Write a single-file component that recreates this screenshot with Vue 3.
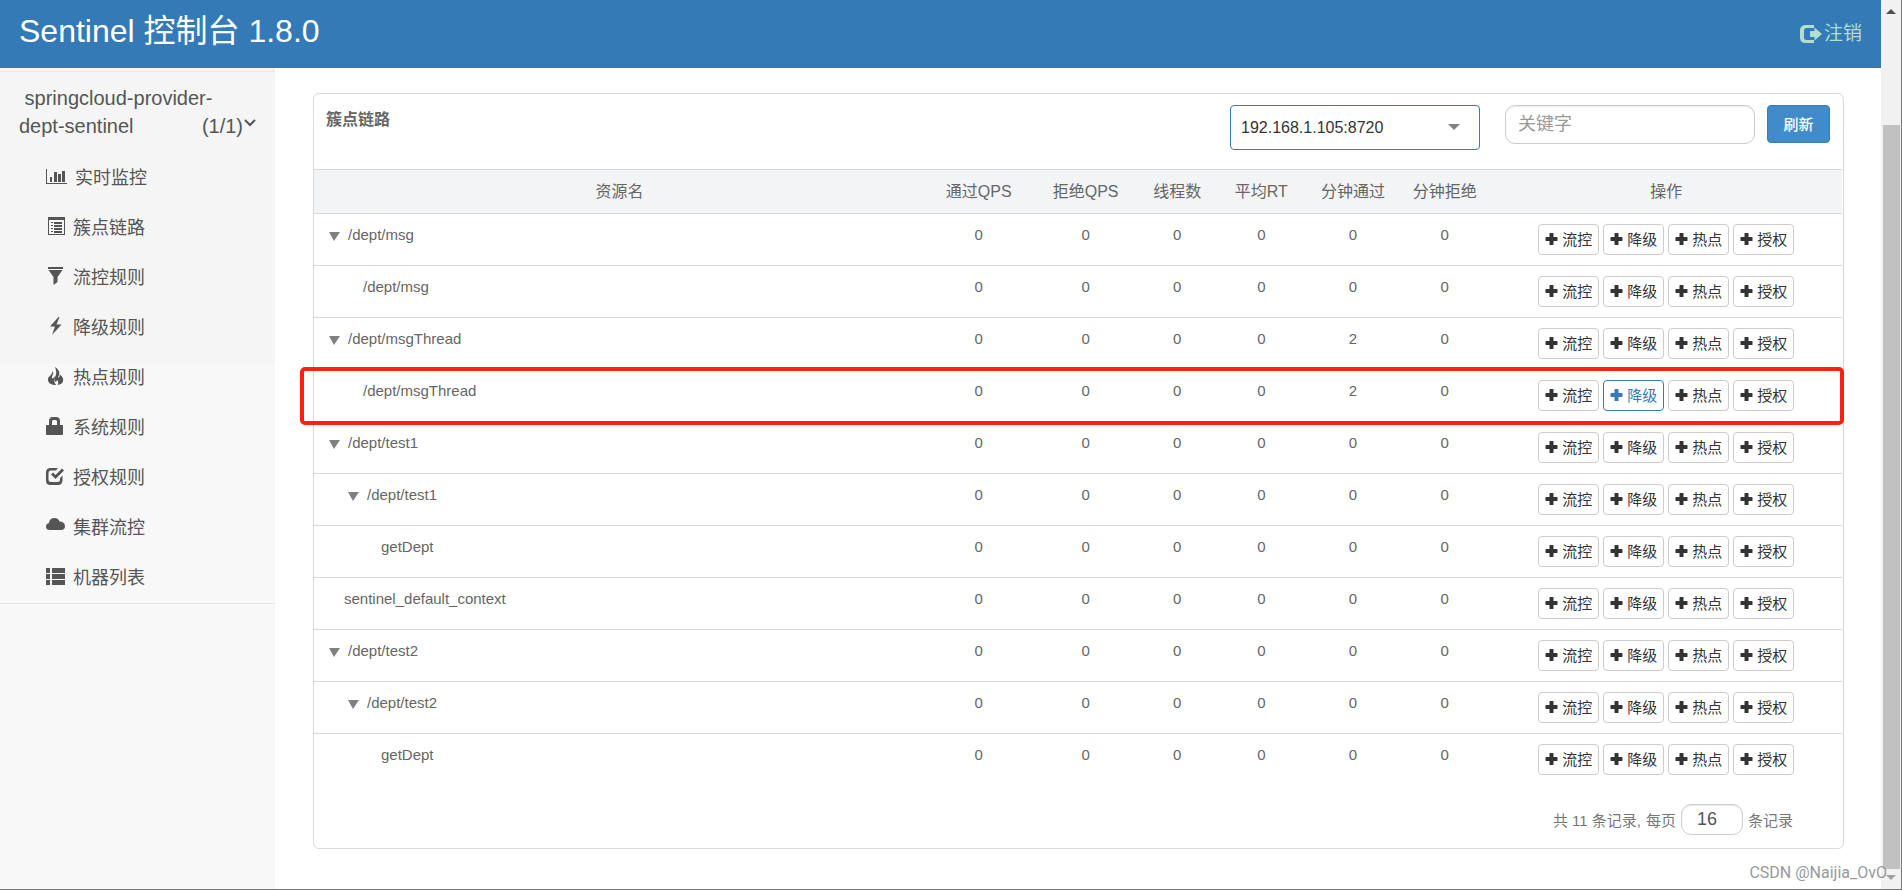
<script setup>
import { ref } from 'vue'

const menu = [
  { icon: 'stats', label: '实时监控' },
  { icon: 'list', label: '簇点链路' },
  { icon: 'filter', label: '流控规则' },
  { icon: 'flash', label: '降级规则' },
  { icon: 'fire', label: '热点规则' },
  { icon: 'lock', label: '系统规则' },
  { icon: 'check', label: '授权规则' },
  { icon: 'cloud', label: '集群流控' },
  { icon: 'rows', label: '机器列表' },
]

const icons = {
  stats: 'M0 2h1v14h20v1H0zM4 10h2v5H4zM8 5h3v10H8zM12 7h3v8h-3zM16 4h3v11h-3z',
  list: 'M2 0h17v18H2zM3 3v14h15V3zM5 5h2v1H5zM8 5h8v2H8zM5 8h2v1H5zM8 8h8v2H8zM5 11h2v1H5zM8 11h8v2H8zM5 14h2v1H5zM8 14h8v2H8z',
  filter: 'M2 0h15v2H2zM2.5 3h14L11.5 10v5L7.500 18v-8z',
  flash: 'M12.500 0L4 9.500h5L6 18l9.500-10.500h-5L13.500 0z',
  fire: 'M9 0c3 2 5 4.500 4.200 7.500C12.700 9 12 9.700 12.300 11c.8-.5 1.400-1.500 1.500-3.500 3.200 2 4 5 3 7.500-.6 1.500-2.700 2.700-5.300 3 1.300-1.700 1-3.600-.3-5-.5 1-1 1.500-1.700 2-1.500-2-1-4.300 0-6C11 6 10 3 9 0zM6.500 4c1.500 2 .5 3.500-.3 5-.7 1.300-.2 2.500.5 2.500s1.500-1 1.600-3C9 11 8 13 8.300 14.500c.2 1.300.8 2.500 1.800 3.500C5.500 18 2 16 2 12.700 1.600 9.500 6.500 8 6.500 4z',
  lock: 'M0 8.500Q0 8 .5 8H3V4Q3 0 7 0h3Q14 0 14 4v4h2.500q.5 0 .5.500V17q0 1-1 1H1q-1 0-1-1zM6 8h5V4.500Q11 3 9.500 3h-2Q6 3 6 4.500z',
  check: 'M4.500 1H12l-2 2.500H5Q2.500 3.500 2.500 6v6.500Q2.500 15 5 15h6.500q2.500 0 2.500-2.500V11l2.500-2.500v4.500Q16.500 18 12 18H4.500Q0 18 0 13.500v-8Q0 1 4.500 1zM5 7.500L7 5.500l2.500 2.500L16 1.500l2 2L9.500 12z',
  cloud: 'M4 13Q0 13 0 9.500q0-3 3-3.500Q3.500 1 8.500 1q4 0 5 3.500 5 0 5.500 4.500 0 4-4 4z',
  rows: 'M0 1h4v5H0zM6 1h13v5H6zM0 7h4v5H0zM6 7h13v5H6zM0 13h4v5H0zM6 13h13v5H6z',
}

const headers = ['资源名', '通过QPS', '拒绝QPS', '线程数', '平均RT', '分钟通过', '分钟拒绝', '操作']
const actions = ['流控', '降级', '热点', '授权']

const rows = [
  { name: '/dept/msg', level: 0, open: true, passed: 0 },
  { name: '/dept/msg', level: 1, passed: 0 },
  { name: '/dept/msgThread', level: 0, open: true, passed: 2 },
  { name: '/dept/msgThread', level: 1, passed: 2, marked: true },
  { name: '/dept/test1', level: 0, open: true, passed: 0 },
  { name: '/dept/test1', level: 1, open: true, passed: 0 },
  { name: 'getDept', level: 2, passed: 0 },
  { name: 'sentinel_default_context', level: 0, passed: 0 },
  { name: '/dept/test2', level: 0, open: true, passed: 0 },
  { name: '/dept/test2', level: 1, open: true, passed: 0 },
  { name: 'getDept', level: 2, passed: 0 },
]

const keyword = ref('')
const pageSize = ref('16')
</script>

<template>
  <div class="page">
    <div class="view">
      <header class="topbar">
        <h1>Sentinel 控制台 1.8.0</h1>
        <a class="logout" href="#">
          <svg width="22" height="18" viewBox="0 0 22 18" aria-hidden="true">
            <path d="M6 0h8v3H6.500Q4 3 4 5.500v7Q4 15 6.500 15H14v3H6Q0 18 0 12.500v-7Q0 0 6 0zM10 6h4.500V2.500L22 9l-7.500 6.500V12H10z" />
          </svg>
          <span>注销</span>
        </a>
      </header>

      <aside class="sidebar">
        <nav class="nav">
          <a class="app" href="#">
            <span>&nbsp;springcloud-provider-</span>
            <span>dept-sentinel</span>
            <span class="count">(1/1)<svg width="12" height="18" viewBox="0 0 12 18" aria-hidden="true"><path d="M1 5l5 5 5-5" /></svg></span>
          </a>
          <ul>
            <li v-for="item in menu" :key="item.label">
              <a href="#">
                <svg :class="['glyph', item.icon]" height="18" aria-hidden="true">
                  <path fill-rule="evenodd" :d="icons[item.icon]" />
                </svg>
                <span>{{ item.label }}</span>
              </a>
            </li>
          </ul>
        </nav>
      </aside>

      <main class="content">
        <section class="card">
          <div class="card-head">
            <h2>簇点链路</h2>
            <div class="machine">
              <select aria-label="机器">
                <option>192.168.1.105:8720</option>
              </select>
              <span class="caret"></span>
            </div>
            <input v-model="keyword" class="search" type="text" placeholder="关键字" aria-label="关键字" />
            <button class="refresh" type="button">刷新</button>
          </div>

          <table>
            <colgroup>
              <col class="c-name" />
              <col class="c-qps" />
              <col class="c-qps" />
              <col class="c-thread" />
              <col class="c-stat" />
              <col class="c-stat" />
              <col class="c-stat" />
              <col />
            </colgroup>
            <thead>
              <tr>
                <th v-for="h in headers" :key="h" scope="col">{{ h }}</th>
              </tr>
            </thead>
            <tbody>
              <tr v-for="(row, i) in rows" :key="i">
                <td class="name">
                  <div :class="['node', 'level-' + row.level, { leaf: !row.open }]">
                    <span v-if="row.open" class="arrow"></span>
                    <span>{{ row.name }}</span>
                  </div>
                  <div v-if="row.marked" class="mark"></div>
                </td>
                <td>0</td>
                <td>0</td>
                <td>0</td>
                <td>0</td>
                <td>{{ row.passed }}</td>
                <td>0</td>
                <td>
                  <div class="actions">
                    <button
                      v-for="(a, n) in actions"
                      :key="a"
                      type="button"
                      :class="{ active: row.marked && n === 1 }"
                    >
                      <svg width="13" height="12" viewBox="0 0 13 12" aria-hidden="true">
                        <path d="M5 0h3q.5 0 .5.500V4h3.500q.5 0 .5.500v3q0 .5-.5.500H8.500v3.500q0 .5-.5.500H5q-.5 0-.5-.5V8H1q-.5 0-.5-.5v-3Q.5 4 1 4h3.500V.5Q4.500 0 5 0z" />
                      </svg>
                      <span>{{ a }}</span>
                    </button>
                  </div>
                </td>
              </tr>
            </tbody>
          </table>

          <div class="pager">
            <span>共 11 条记录, </span>
            <label for="page-size">每页</label>
            <input id="page-size" v-model="pageSize" type="text" />
            <span>条记录</span>
          </div>
        </section>
      </main>
    </div>

    <div class="scroll" aria-hidden="true">
      <span class="tri up"></span>
      <span class="thumb"></span>
      <span class="tri down"></span>
    </div>
    <div class="watermark">CSDN @Naijia_OvO</div>
  </div>
</template>

<style>
body {
  margin: 0;
  background: #fff;
}
</style>

<style scoped>
* {
  box-sizing: border-box;
}

.page {
  position: relative;
  display: grid;
  grid-template-columns: minmax(0, 1fr) 20px;
  min-height: 100vh;
  border-right: 1px solid #777;
  border-bottom: 1px solid #777;
  font-family: "Liberation Sans", "Noto Sans CJK SC", sans-serif;
  font-size: 15px;
  color: #666;
}

a {
  color: inherit;
  text-decoration: none;
}

button,
input,
select {
  font-family: inherit;
}

.view {
  display: grid;
  grid-template-columns: 275px minmax(0, 1fr);
  grid-template-rows: 68px 1fr;
}

.topbar {
  grid-column: 1 / -1;
  display: flex;
  justify-content: space-between;
  padding: 0 19px;
  background: #337ab7;
}

.topbar h1 {
  margin: 0;
  font-size: 32px;
  font-weight: 400;
  line-height: 62px;
  color: #fff;
}

.logout {
  display: flex;
  align-items: center;
  gap: 2px;
  font-size: 19px;
  line-height: 70px;
  color: #b0dfcb;
}

.logout svg,
.glyph,
.actions svg {
  fill: currentColor;
}

.sidebar {
  padding-top: 3px;
  background: linear-gradient(#f5f5f5 296px, #f8f8f8 296px);
}

.nav {
  border-top: 1px solid #e7e7e7;
  border-bottom: 1px solid #e7e7e7;
  color: #555;
}

.app {
  display: flex;
  flex-wrap: wrap;
  padding: 12px 19px 11px 19px;
  font-size: 20px;
  line-height: 28px;
}

.count {
  margin-left: auto;
}

.count svg {
  margin-left: 1px;
  fill: none;
  stroke: #555;
  stroke-width: 2;
}

.nav ul {
  margin: 0;
  padding: 0 0 2px;
  list-style: none;
}

.nav li a {
  display: flex;
  align-items: center;
  gap: 7px;
  height: 50px;
  padding-left: 46px;
  font-size: 18px;
}

.glyph {
  width: 20px;
}

.glyph.stats {
  width: 22px;
}

.content {
  padding: 25px 37px 40px 38px;
}

.card {
  border: 1px solid #d9d9d9;
  border-radius: 6px;
}

.card-head {
  display: flex;
  align-items: flex-start;
  height: 75px;
  padding: 11px 13px 0 12px;
}

.card-head h2 {
  flex: 1;
  margin: 0;
  font-size: 16px;
  font-weight: 700;
  line-height: 30px;
}

.machine {
  position: relative;
  width: 250px;
  margin-right: 25px;
}

.machine select {
  appearance: none;
  display: block;
  width: 100%;
  height: 45px;
  padding: 0 10px;
  border: 1px solid #337ab7;
  border-radius: 4px;
  background: #fff;
  font-size: 16px;
  color: #333;
}

.caret {
  position: absolute;
  top: 19px;
  right: 20px;
  border: 6px solid transparent;
  border-top: 6px solid #808080;
  border-bottom: 0;
}

.search {
  width: 250px;
  height: 39px;
  margin-right: 12px;
  padding: 0 12px;
  border: 1px solid #ccc;
  border-radius: 10px;
  box-shadow: inset 0 1px 1px rgba(0, 0, 0, 0.08);
  font-size: 18px;
  color: #555;
}

.search::placeholder {
  color: #999;
}

.refresh {
  width: 63px;
  height: 38px;
  padding: 0 0 2px;
  border: 1px solid #357ebd;
  border-radius: 4px;
  background: #428bca;
  font-size: 15px;
  font-weight: 500;
  color: #fff;
}

table {
  width: 100%;
  padding-right: 1px;
  table-layout: fixed;
  border-collapse: separate;
  border-spacing: 0;
}

.c-name {
  width: 40%;
}

.c-qps {
  width: 7%;
}

.c-thread {
  width: 5%;
}

.c-stat {
  width: 6%;
}

th {
  height: 44px;
  padding: 0 0 3px;
  border-top: 1px solid #d9d9d9;
  background: #f3f4f6;
  font-size: 16px;
  font-weight: 400;
}

tbody tr {
  position: relative;
}

td {
  height: 52px;
  padding: 10px 0;
  border-top: 1px solid #d9d9d9;
  line-height: 22px;
  text-align: center;
  vertical-align: top;
}

.node {
  display: flex;
  align-items: center;
  gap: 8px;
  padding-left: 15px;
  text-align: left;
}

.node.level-1 {
  padding-left: 34px;
}

.node.leaf {
  padding-left: 30px;
}

.node.leaf.level-1 {
  padding-left: 49px;
}

.node.leaf.level-2 {
  padding-left: 67px;
}

.arrow {
  margin-top: 3px;
  border: 5px solid transparent;
  border-width: 9px 6px 0 5px;
  border-top-color: #808080;
}

.mark {
  position: absolute;
  z-index: 1;
  top: -2px;
  right: -2px;
  bottom: -4px;
  left: -14px;
  border: 4px solid #ff2012;
  border-radius: 5px;
  pointer-events: none;
}

.actions {
  display: flex;
  justify-content: center;
  gap: 4px;
}

.actions button {
  display: flex;
  align-items: center;
  gap: 4px;
  height: 31px;
  padding: 0 6px 2px;
  border: 1px solid #ccc;
  border-radius: 4px;
  background: #fff;
  font-size: 15px;
  color: #333;
}

.actions .active {
  border-color: #337ab7;
  color: #337ab7;
}

.pager {
  display: flex;
  align-items: center;
  justify-content: flex-end;
  gap: 5px;
  height: 63px;
  padding: 6px 50px 0 0;
  color: #777;
}

.pager input {
  width: 62px;
  height: 31px;
  padding: 0 15px;
  border: 1px solid #ccc;
  border-radius: 10px;
  box-shadow: inset 0 1px 1px rgba(0, 0, 0, 0.08);
  font-size: 18px;
  color: #555;
}

.scroll {
  display: flex;
  flex-direction: column;
  align-items: center;
  padding: 9px 0;
  background: #f1f1f1;
}

.tri {
  border: 5px solid transparent;
}

.tri.up {
  border-top: 0;
  border-bottom-color: #505050;
}

.tri.down {
  margin-top: 6px;
  border-bottom: 0;
  border-top-color: #a0a0a0;
}

.thumb {
  flex: 1;
  width: 17px;
  margin-top: 111px;
  background: #c1c1c1;
}

.watermark {
  position: absolute;
  right: 14px;
  bottom: 6px;
  font-family: Roboto, sans-serif;
  font-size: 16px;
  line-height: 20px;
  color: #999;
}
</style>
